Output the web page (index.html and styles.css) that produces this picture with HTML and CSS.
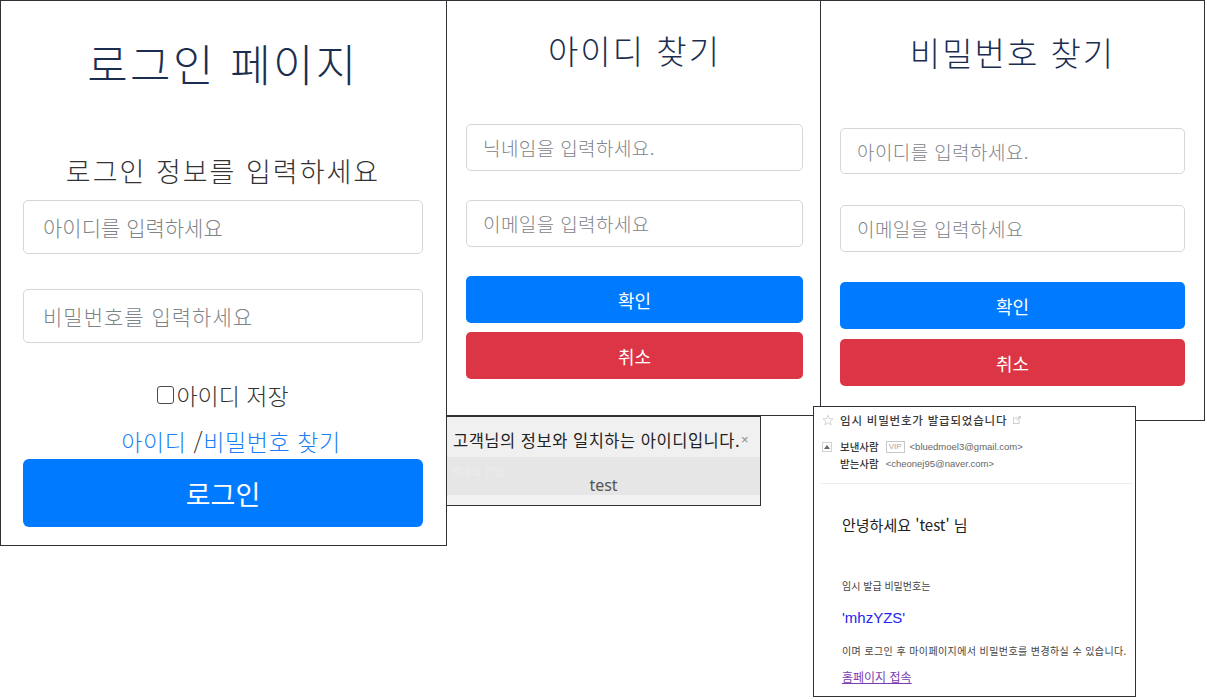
FILE: index.html
```html
<!DOCTYPE html>
<html lang="ko">
<head>
<meta charset="utf-8">
<title>로그인 / 아이디 찾기 / 비밀번호 찾기</title>
<link rel="stylesheet" href="styles.css">
</head>
<body>
<div class="canvas">

  <section class="win login">
    <h1 class="login-title">로그인 페이지</h1>
    <h2 class="login-sub">로그인 정보를 입력하세요</h2>
    <input class="field field-lg first" type="text" placeholder="아이디를 입력하세요">
    <input class="field field-lg second" type="password" placeholder="비밀번호를 입력하세요">
    <label class="save-row"><input class="check" type="checkbox">아이디 저장</label>
    <div class="find-row"><a class="link" href="#">아이디 </a><span class="slash">/</span><a class="link" href="#">비밀번호 찾기</a></div>
    <button class="btn btn-blue btn-lg" type="button">로그인</button>
  </section>

  <section class="win find find-id">
    <h1 class="find-title">아이디 찾기</h1>
    <input class="field field-md f1" type="text" placeholder="닉네임을 입력하세요.">
    <input class="field field-md f2" type="text" placeholder="이메일을 입력하세요">
    <button class="btn btn-blue btn-md b1" type="button">확인</button>
    <button class="btn btn-red btn-md b2" type="button">취소</button>
  </section>

  <section class="win find find-pw">
    <h1 class="find-title">비밀번호 찾기</h1>
    <input class="field field-md f1" type="text" placeholder="아이디를 입력하세요.">
    <input class="field field-md f2" type="text" placeholder="이메일을 입력하세요">
    <button class="btn btn-blue btn-md b1" type="button">확인</button>
    <button class="btn btn-red btn-md b2" type="button">취소</button>
  </section>

  <section class="win dialog">
    <div class="dlg-head"><span class="dlg-msg">고객님의 정보와 일치하는 아이디입니다.</span><span class="dlg-x">×</span></div>
    <div class="dlg-body"><span class="dlg-ghost">명예의 전당</span><span class="dlg-value">test</span></div>
    <div class="dlg-foot"></div>
  </section>

  <section class="win mail">
    <div class="mail-head">
      <div class="mail-row mail-subject">
        <svg class="ico-star" width="12" height="12" viewBox="0 0 24 24"><path d="M12 2.5l2.9 6.6 7.1.6-5.4 4.7 1.6 7-6.2-3.7-6.2 3.7 1.6-7L2 9.7l7.1-.6z" fill="none" stroke="#c9c9c9" stroke-width="1.6" stroke-linejoin="round"/></svg>
        <span class="subject">임시 비밀번호가 발급되었습니다</span>
        <svg class="ico-ext" width="8" height="8" viewBox="0 0 10 10"><rect x="0.5" y="2.5" width="7" height="7" fill="none" stroke="#c4c4c4" stroke-width="1"/><path d="M4.5 5.5L9.5 0.5M6.5 0.5h3v3" fill="none" stroke="#c4c4c4" stroke-width="1"/></svg>
      </div>
      <div class="mail-row">
        <span class="up-box"><svg width="6" height="4" viewBox="0 0 6 4"><path d="M0 4L3 0 6 4z" fill="#666"/></svg></span>
        <span class="who">보낸사람</span>
        <span class="vip">VIP</span>
        <span class="addr">&lt;bluedmoel3@gmail.com&gt;</span>
      </div>
      <div class="mail-row indent">
        <span class="who">받는사람</span>
        <span class="addr">&lt;cheonej95@naver.com&gt;</span>
      </div>
    </div>
    <div class="mail-sep"></div>
    <div class="mail-body">
      <p class="greet">안녕하세요 'test' 님</p>
      <p class="small t1">임시 발급 비밀번호는</p>
      <p class="pw">'mhzYZS'</p>
      <p class="small t2">이며 로그인 후 마이페이지에서 비밀번호를 변경하실 수 있습니다.</p>
      <a class="home" href="#">홈페이지 접속</a>
    </div>
  </section>

</div>
</body>
</html>
```

FILE: styles.css
```css
* { box-sizing: border-box; }

html, body {
  margin: 0;
  padding: 0;
  background: #ffffff;
}

body {
  font-family: "Noto Sans CJK KR", "Noto Sans", sans-serif;
  color: #333;
}

.canvas {
  position: relative;
  width: 1207px;
  height: 700px;
  overflow: hidden;
}

.win {
  position: absolute;
  background: #fff;
  border: 1px solid #2e3236;
  display: flex;
  flex-direction: column;
}

/* ---------- login ---------- */
.login {
  left: 0;
  top: 0;
  width: 447px;
  height: 546px;
  padding: 0 23px 0 22px;
}

.login-title {
  margin: 37px 0 0;
  height: 50px;
  line-height: 50px;
  font-size: 44px;
  font-weight: 300;
  text-align: center;
  color: #1b2e50;
  letter-spacing: 2.3px;
}

.login-sub {
  margin: 67px 0 0;
  height: 32px;
  line-height: 32px;
  font-size: 27px;
  font-weight: 300;
  text-align: center;
  color: #333;
  letter-spacing: 2px;
}

.field {
  display: block;
  width: 100%;
  border: 1px solid #d3d7dc;
  border-radius: 5px;
  background: #fff;
  font-family: "Noto Sans CJK KR", sans-serif;
  font-weight: 300;
  color: #333;
  outline: none;
}

.field::placeholder { color: #7f8489; }

.field-lg {
  height: 54px;
  padding: 0 19px;
  font-size: 21px;
}

.login .first { margin-top: 13px; }
.login .second { margin-top: 35px; }
.login .second::placeholder { letter-spacing: 1px; }

.save-row {
  margin-top: 37px;
  height: 30px;
  display: flex;
  align-items: center;
  justify-content: center;
  font-size: 23px;
  font-weight: 300;
  color: #333;
}

.check {
  appearance: none;
  -webkit-appearance: none;
  width: 17px;
  height: 18px;
  margin: 0 2px 0 0;
  border: 1.5px solid #4a4a4a;
  border-radius: 3px;
  background: #fff;
}

.find-row {
  margin-top: 16px;
  height: 30px;
  line-height: 30px;
  text-align: center;
  font-size: 23px;
  font-weight: 300;
  letter-spacing: 0.6px;
  padding-left: 16px;
}

.link {
  color: #1a7ff7;
  text-decoration: none;
  white-space: pre;
}

.slash { color: #333; }

.btn {
  display: block;
  width: 100%;
  border: 0;
  border-radius: 5px;
  color: #fff;
  font-family: "Noto Sans CJK KR", sans-serif;
  font-weight: 400;
  cursor: pointer;
}

.btn-blue { background: #007bff; }
.btn-red { background: #dc3545; }

.btn-lg {
  margin-top: 3px;
  height: 68px;
  font-size: 27px;
  border-radius: 6px;
}

/* ---------- find id / pw ---------- */
.find { top: 0; }

.find-id {
  left: 446px;
  width: 375px;
  height: 416px;
  padding: 0 17px 0 19px;
}

.find-pw {
  left: 820px;
  width: 385px;
  height: 421px;
  padding: 0 19px;
}

.find-title {
  margin: 27px 0 0;
  height: 44px;
  line-height: 44px;
  font-size: 33px;
  font-weight: 300;
  text-align: center;
  color: #1b2e50;
  letter-spacing: 2px;
}

.find-pw .find-title { margin-top: 29px; }

.field-md {
  height: 47px;
  padding: 0 16px;
  font-size: 19px;
  letter-spacing: 0.4px;
}

.find-id .f1 { margin-top: 52px; }
.find-id .f2 { margin-top: 29px; }
.find-id .b1 { margin-top: 29px; }
.find-id .b2 { margin-top: 9px; }

.find-pw .f1 { margin-top: 54px; height: 46px; }
.find-pw .f2 { margin-top: 31px; }
.find-pw .b1 { margin-top: 30px; }
.find-pw .b2 { margin-top: 10px; }

.btn-md {
  height: 47px;
  font-size: 18px;
}

/* ---------- dialog ---------- */
.dialog {
  left: 446px;
  top: 416px;
  width: 315px;
  height: 90px;
  background: #f2f2f2;
}

.dlg-head {
  height: 40px;
  background: #f0f0f0;
  display: flex;
  align-items: center;
  padding: 5px 0 0 6px;
}

.dlg-msg {
  font-size: 16.5px;
  color: #222;
  letter-spacing: 0.5px;
  white-space: nowrap;
}

.dlg-x {
  margin-left: 1px;
  font-family: "Liberation Sans", sans-serif;
  font-size: 13px;
  color: #8a8a8a;
}

.dlg-body {
  position: relative;
  height: 38px;
  background: #e6e6e6;
  display: flex;
  align-items: flex-end;
  justify-content: center;
  padding-bottom: 0;
}

.dlg-ghost {
  position: absolute;
  left: 4px;
  top: 6px;
  font-size: 11px;
  color: #ededed;
}

.dlg-value {
  font-family: "Noto Sans", sans-serif;
  font-size: 16px;
  line-height: 20px;
  color: #555;
}

.dlg-foot {
  flex: 1;
  background: #f2f2f2;
}

/* ---------- mail ---------- */
.mail {
  left: 813px;
  top: 406px;
  width: 323px;
  height: 291px;
  font-family: "Liberation Sans", "Noto Sans CJK KR", sans-serif;
}

.mail-head {
  padding: 0 0 0 8px;
}

.mail-row {
  display: flex;
  align-items: center;
  height: 17px;
}

.mail-subject {
  height: 24px;
  margin-bottom: 7px;
  padding-top: 1px;
}

.ico-star { margin-right: 6px; }

.subject {
  font-family: "Noto Sans CJK KR", sans-serif;
  font-size: 11.5px;
  font-weight: 500;
  color: #3a3a3a;
  letter-spacing: 0.8px;
}

.ico-ext { margin-left: 6px; }

.up-box {
  width: 10px;
  height: 10px;
  border: 1px solid #d0d0d0;
  display: flex;
  align-items: center;
  justify-content: center;
  margin-right: 8px;
}

.indent { padding-left: 18px; }

.who {
  font-family: "Noto Sans CJK KR", sans-serif;
  font-size: 10.5px;
  font-weight: 500;
  color: #333;
  margin-right: 7px;
}

.vip {
  border: 1px solid #c8c8c8;
  font-size: 8px;
  line-height: 10px;
  padding: 0 2px;
  color: #aaa;
  margin-right: 5px;
}

.addr {
  font-size: 9.5px;
  color: #666;
}

.mail-sep {
  margin: 11px 2px 0 7px;
  height: 1px;
  background: #ededed;
}

.mail-body {
  padding-left: 28px;
  display: flex;
  flex-direction: column;
  align-items: flex-start;
}

.mail-body p { margin: 0; }

.greet {
  margin-top: 31px !important;
  font-family: "Noto Sans CJK KR", sans-serif;
  font-size: 15px;
  line-height: 20px;
  color: #222;
}

.small {
  font-family: "Noto Sans CJK KR", sans-serif;
  font-size: 10px;
  line-height: 14px;
  color: #444;
}

.t1 { margin-top: 44px !important; }

.pw {
  margin-top: 15px !important;
  font-size: 15px;
  line-height: 20px;
  color: #2424f0;
}

.t2 { margin-top: 16px !important; letter-spacing: 0.4px; }

.home {
  margin-top: 12px;
  font-family: "Noto Sans CJK KR", sans-serif;
  font-size: 12px;
  line-height: 14px;
  color: #7a3db0;
  text-decoration: underline;
}
```
